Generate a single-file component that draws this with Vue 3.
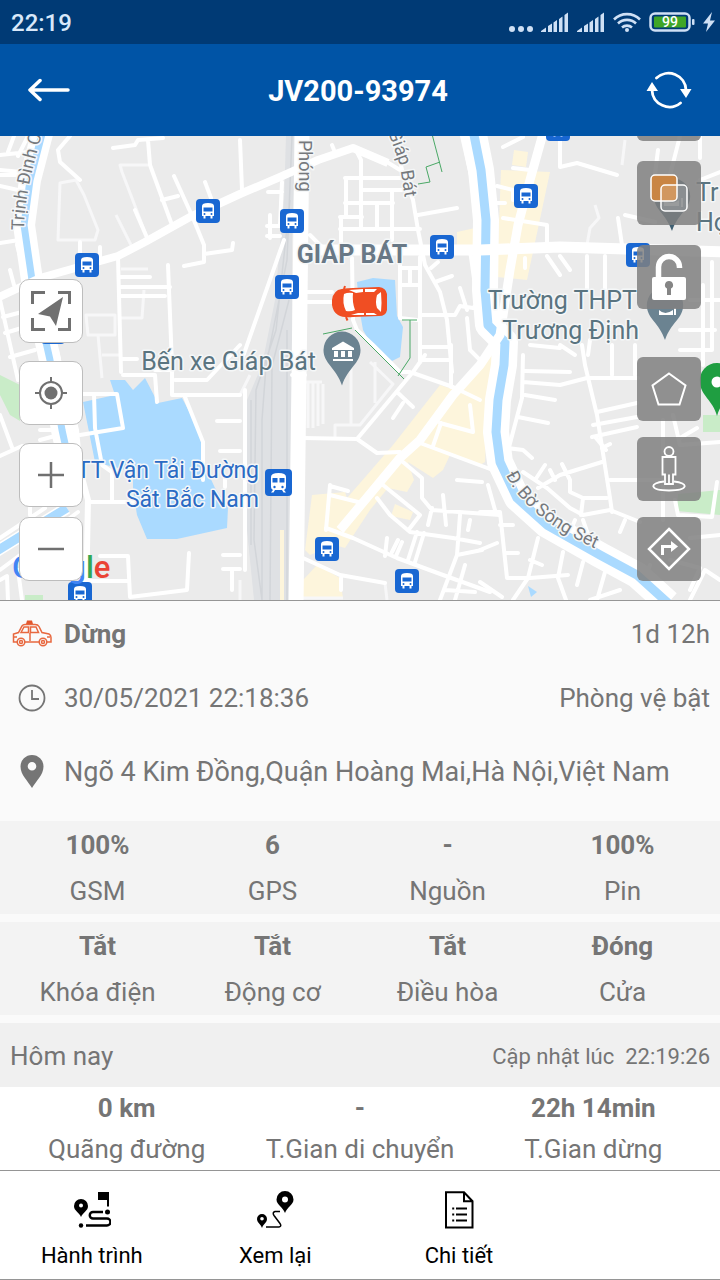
<template>
  <div class="page">
    <!-- Thanh trạng thái -->
    <div class="status-bar">
      <span class="clock">22:19</span>
      <div class="status-icons">
        <svg class="dots" viewBox="0 0 24 20">
          <circle v-for="x in [3, 12, 21]" :key="x" :cx="x" cy="17" r="3" />
        </svg>
        <svg v-for="n in 2" :key="n" class="signal" viewBox="0 0 28 20">
          <path d="M0 20v-1l5-3.500v4.500zM7 20v-6l4-2.500v8.500zM12.500 20v-9.500l3.500-2.500v12zM18 20v-13l3.500-2.500v15.500zM23.500 20v-17l3.500-2.500v19.500z" />
        </svg>
        <svg class="wifi" viewBox="0 0 28 20">
          <g fill="none" stroke="#cfe0f5" stroke-width="2.600">
            <path d="M1 7.500a18.500 18.500 0 0 1 26 0" />
            <path d="M5 11.500a13 13 0 0 1 18 0" />
            <path d="M9 15.500a7.500 7.500 0 0 1 10 0" />
          </g>
          <circle cx="14" cy="18" r="2" />
        </svg>
        <svg class="battery" viewBox="0 0 46 20">
          <rect x="1.500" y="1.500" width="39" height="17" rx="4.500" fill="none" stroke="#cfe0f5" stroke-width="2.500" />
          <rect x="5" y="4.500" width="32" height="11" rx="1" fill="#3fa527" />
          <rect x="43" y="7" width="2.500" height="6" rx="1" />
          <text x="21" y="15" text-anchor="middle">99</text>
        </svg>
        <svg class="bolt" viewBox="0 0 12 20">
          <path d="M9 0L0 11.500h5L3 20l9-11.500H7z" />
        </svg>
      </div>
    </div>

    <header class="app-header">
      <button class="header-btn" aria-label="Quay lại">
        <svg width="42" height="24" viewBox="0 0 42 24">
          <path d="M2 12h38M12 2.500L2 12l10 9.500" fill="none" stroke="#fff" stroke-width="3.500" stroke-linecap="round" stroke-linejoin="round" />
        </svg>
      </button>
      <h1>JV200-93974</h1>
      <button class="header-btn" aria-label="Làm mới">
        <svg width="46" height="40" viewBox="0 0 46 40">
          <path d="M10.500 8A17.500 17.500 0 0 1 40 20M34.500 33A17.500 17.500 0 0 1 6 20" fill="none" stroke="#fff" stroke-width="2.800" stroke-linecap="round" />
          <path d="M34 19h11.500L40 28zM0.500 21h11.500L6 12z" fill="#fff" />
        </svg>
      </button>
    </header>

    <main class="map">
      <svg class="map-canvas" viewBox="0 136 720 464" preserveAspectRatio="xMidYMid slice">
        <defs>
          <symbol id="bus" viewBox="0 0 24 24">
            <rect width="24" height="24" rx="4" fill="#1967d2" />
            <path d="M6 7q0-3 6-3t6 3v10h-1.500v2.500h-2V17h-5v2.500h-2V17H6z" fill="#fff" />
            <path d="M7.500 8.500h9v4h-9z" fill="#1967d2" />
            <circle cx="8.500" cy="15" r="1" fill="#1967d2" />
            <circle cx="15.500" cy="15" r="1" fill="#1967d2" />
          </symbol>
          <symbol id="pin" viewBox="0 0 38 54">
            <path d="M19 0a18.500 18.500 0 0 1 18.500 18.500C37.500 32 25 36 19 54 13 36 .5 32 .5 18.500A18.500 18.500 0 0 1 19 0z" />
          </symbol>
        </defs>

        <rect x="0" y="136" width="720" height="464" fill="#ebebeb" />

        <!-- Đường sắt -->
        <path d="M286 136H296L292 240V600H254L247 530V400L262 365L275 300L284 200Z" fill="#dfe1e4" />
        <path class="rail" d="M292 136L287 260 266 366 262 420V600M290 200L276 330 256 390 254 540 262 600M289 300L272 366 270 600M287 330V600M251 400V545" />

        <path v-for="d in parks" :key="d" :d="d" fill="#c9ecc8" />
        <path v-for="d in blocks" :key="d" :d="d" fill="#fdf5dc" />
        <path v-for="d in lakes" :key="d" :d="d" fill="#aadaff" />

        <path v-for="d in lanes" :key="d" :d="d" class="lane" />
        <path v-for="d in roads" :key="d" :d="d" class="road" />
        <path v-for="r in rivers" :key="r.d" :d="r.d" class="bank" :stroke-width="r.bank" />
        <path v-for="r in rivers" :key="r.d" :d="r.d" class="river" :stroke-width="r.w" />
        <path v-for="r in avenues" :key="r.d" :d="r.d" class="avenue" :stroke-width="r.w" />
        <path v-for="d in greenLines" :key="d" :d="d" class="green-line" />

        <use v-for="b in busStops" :key="b.x + '-' + b.y" href="#bus" :x="b.x - 12" :y="b.y - 12" width="24" height="24" />

        <!-- Ga tàu -->
        <g>
          <rect x="265" y="469" width="27" height="27" rx="4" fill="#1967d2" />
          <path d="M271 477q0-4 7.500-4t7.500 4v10q0 2-2 3l2 2.500h-2.500l-1.500-2.500h-7l-1.500 2.500H271l2-2.500q-2-1-2-3z" fill="#fff" />
          <path d="M272.500 478h5v4.500h-5zM279.500 478h5v4.500h-5z" fill="#1967d2" />
          <circle cx="274.500" cy="487" r="1.200" fill="#1967d2" />
          <circle cx="282.500" cy="487" r="1.200" fill="#1967d2" />
        </g>

        <g fill="#6b8391">
          <use href="#pin" x="323" y="331" width="38" height="55" />
          <use href="#pin" x="646" y="287" width="38" height="53" />
          <use href="#pin" x="653" y="178" width="38" height="53" fill="#3f5f72" />
        </g>
        <path d="M332 348l11-6.500 11 6.500v2h-22zM334 351h4v6h-4zM341 351h4v6h-4zM348 351h4v6h-4zM333 359h20v2h-20z" fill="#fff" />
        <path d="M659 310q6 6 14 0v5h-14zM674 308h2v7h-2z" fill="#fff" />
        <path d="M664 200q8 6 15 0v6h-15zM681 198h2v9h-2z" fill="#b9c6ce" />

        <!-- Nhãn địa điểm -->
        <text class="label area" x="352" y="263" text-anchor="middle">GIÁP BÁT</text>
        <text class="label place" x="316" y="370" text-anchor="end">Bến xe Giáp Bát</text>
        <text class="label place" x="637" y="309" text-anchor="end">Trường THPT</text>
        <text class="label place" x="639" y="339" text-anchor="end">Trương Định</text>
        <text class="label place" x="696" y="201">Tr</text>
        <text class="label place" x="696" y="231">Họ</text>
        <text class="label transit" x="259" y="478" text-anchor="end">TT Vận Tải Đường</text>
        <text class="label transit" x="259" y="507" text-anchor="end">Sắt Bắc Nam</text>

        <path id="street-trinh" d="M24 230Q24 190 47 118" fill="none" />
        <path id="street-giap" d="M388 132L400 165 411 240" fill="none" />
        <path id="street-phong" d="M299 140V230" fill="none" />
        <path id="street-set" d="M506 475Q528 523 620 559" fill="none" />
        <text class="label street"><textPath href="#street-trinh">Trịnh Đình C</textPath></text>
        <text class="label street"><textPath href="#street-giap">Giáp Bát</textPath></text>
        <text class="label street"><textPath href="#street-phong">Phóng</textPath></text>
        <text class="label street"><textPath href="#street-set">Đ. Bờ Sông Sét</textPath></text>

        <text class="brand" x="12" y="578"><tspan fill="#4285f4">G</tspan><tspan fill="#ea4335">o</tspan><tspan fill="#fbbc05">o</tspan><tspan fill="#4285f4">g</tspan><tspan fill="#34a853">l</tspan><tspan fill="#ea4335">e</tspan></text>

        <!-- Xe -->
        <g>
          <path d="M344 289l1-3M346 317l1.500 3.500" stroke="#f04e23" stroke-width="2" />
          <path d="M338 290q5-2 15-2l26-1q7 1 8 7v16q-1 6-8 6l-26 1q-10 1-15-2-5-3-6-10-1-11 6-15z" fill="#f04e23" />
          <path d="M344 294q4-2 9-1-1 9 2 17-4 2-9 1-4-8-2-17zM377 295l4-3q1 11 0 20l-4-4q-2-6 0-13zM349 290l14-1v3l-7 1zM365 289h12l-3 3h-9zM351 315l7-2h6v2zM366 313h8l3 2h-11z" fill="#fff" />
        </g>

        <path d="M717 363a17 17 0 0 1 17 19c0 13-13 18-17 34-4-16-17-21-17-34a17 17 0 0 1 17-19z" fill="#1f9e41" />
        <circle cx="717" cy="382" r="5.500" fill="#fff" />
      </svg>

      <div class="tools tools-left">
        <button class="tool light" aria-label="Theo dõi xe">
          <svg width="40" height="40" viewBox="0 0 40 40">
            <path d="M1.500 13V1.500H14M27 1.500h11.500V13M38.500 27v11.500H27M14 38.500H1.500V27" fill="none" stroke="#707070" stroke-width="3" />
            <path d="M32 6L7 23l12 2.500L25 35z" fill="#707070" />
          </svg>
        </button>
        <button class="tool light" aria-label="Vị trí của tôi">
          <svg width="34" height="34" viewBox="0 0 34 34">
            <circle cx="17" cy="17" r="11" fill="none" stroke="#707070" stroke-width="2" />
            <circle cx="17" cy="17" r="6.500" fill="#707070" />
            <path d="M17 1v6M17 27v6M1 17h6M27 17h6" stroke="#707070" stroke-width="2" />
          </svg>
        </button>
        <div class="zoom">
          <button class="tool light" aria-label="Phóng to">
            <svg width="26" height="26" viewBox="0 0 26 26"><path d="M13 0v26M0 13h26" stroke="#707070" stroke-width="2.500" /></svg>
          </button>
          <button class="tool light" aria-label="Thu nhỏ">
            <svg width="26" height="26" viewBox="0 0 26 26"><path d="M0 13h26" stroke="#707070" stroke-width="2.500" /></svg>
          </button>
        </div>
      </div>

      <div class="tools tools-right">
        <div class="group upper">
          <button class="tool dark" aria-label="Tùy chọn bản đồ"></button>
          <button class="tool dark" aria-label="Lớp bản đồ">
            <svg width="40" height="38" viewBox="0 0 40 38">
              <rect x="2" y="1" width="26" height="26" rx="4" fill="#c98544" stroke="#fff" stroke-width="1.500" />
              <rect x="12" y="11" width="26" height="26" rx="4" fill="#fff" fill-opacity=".15" stroke="#fff" stroke-width="1.500" />
            </svg>
          </button>
          <button class="tool dark" aria-label="Mở khóa">
            <svg width="36" height="48" viewBox="0 0 36 48">
              <path d="M7.500 26V14a10.500 10.500 0 0 1 21 0v1" fill="none" stroke="#fff" stroke-width="5.500" stroke-linecap="butt" />
              <rect x="1" y="24" width="34" height="23" rx="2" fill="#fff" />
              <path d="M18 28a4 4 0 0 1 2 7.500V42h-4v-6.500a4 4 0 0 1 2-7.500z" fill="#858585" />
            </svg>
          </button>
        </div>
        <div class="group lower">
          <button class="tool dark" aria-label="Vùng">
            <svg width="36" height="34" viewBox="0 0 36 34">
              <path d="M18 1.500L34.500 13.500 28.500 32.500H7.500L1.500 13.500z" fill="none" stroke="#fff" stroke-width="2" />
            </svg>
          </button>
          <button class="tool dark" aria-label="Xem phố">
            <svg width="34" height="46" viewBox="0 0 34 46">
              <g fill="none" stroke="#fff" stroke-width="1.800">
                <circle cx="17" cy="5.500" r="4.500" />
                <path d="M10.500 11h13v17.500H21V38h-8V28.500h-2.500zM17 28.500V38" />
                <path d="M12 35.500C-3 37-3 44.500 17 44.500s20-7.500 5-9" />
              </g>
            </svg>
          </button>
          <button class="tool dark" aria-label="Chỉ đường">
            <svg width="44" height="44" viewBox="0 0 44 44">
              <path d="M22 2L42 22 22 42 2 22z" fill="none" stroke="#fff" stroke-width="2.500" />
              <path d="M15.500 28v-8.500H25" fill="none" stroke="#fff" stroke-width="3" />
              <path d="M24 14l7 5.500-7 5.500z" fill="#fff" />
            </svg>
          </button>
        </div>
      </div>
    </main>

    <section class="info">
      <div class="info-row">
        <svg class="info-icon" viewBox="0 0 40 28">
          <path d="M14 4l1-3.500h5L21 4z" fill="#e2562d" />
          <g fill="none" stroke="#e8683f" stroke-width="1.500">
            <path d="M5 22H1.500v-8l5-1.500L10 6q1-1.500 3-1.500h10q3 0 4 2l3 6 7 1.500q2 1 2 3.500v4.500h-4M13 22h14" />
            <path d="M9 12.500L12 7h4.500v5.500zM18.500 7H24l2.500 5.500h-8zM18 13v8M2 17h3M35 17h3" />
            <circle cx="9" cy="22" r="3.800" />
            <circle cx="31" cy="22" r="3.800" />
            <circle cx="9" cy="22" r="1.500" />
            <circle cx="31" cy="22" r="1.500" />
          </g>
        </svg>
        <strong>Dừng</strong>
        <span class="end">1d 12h</span>
      </div>
      <div class="info-row">
        <svg class="info-icon" viewBox="0 0 40 28">
          <circle cx="20" cy="14" r="12.500" fill="none" stroke="#757575" stroke-width="1.800" />
          <path d="M20 6v9h7" fill="none" stroke="#757575" stroke-width="1.800" />
        </svg>
        <time>30/05/2021 22:18:36</time>
        <span class="end">Phòng vệ bật</span>
      </div>
      <div class="info-row address">
        <svg class="info-icon tall" viewBox="0 0 40 34">
          <path fill-rule="evenodd" d="M20 0a11.500 11.500 0 0 1 11.500 11.500C31.500 20 24 26 20 33 16 26 8.500 20 8.500 11.500A11.500 11.500 0 0 1 20 0zm0 7a4.300 4.300 0 1 0 0 8.600 4.300 4.300 0 0 0 0-8.600z" fill="#757575" />
        </svg>
        <span>Ngõ 4 Kim Đồng,Quận Hoàng Mai,Hà Nội,Việt Nam</span>
      </div>
    </section>

    <dl v-for="(group, i) in sensors" :key="i" class="stats">
      <div v-for="item in group" :key="item.label">
        <dd>{{ item.value }}</dd>
        <dt>{{ item.label }}</dt>
      </div>
    </dl>

    <div class="today-head">
      <span>Hôm nay</span>
      <span class="updated">Cập nhật lúc&nbsp; 22:19:26</span>
    </div>
    <dl class="stats today">
      <div v-for="item in today" :key="item.label">
        <dd>{{ item.value }}</dd>
        <dt>{{ item.label }}</dt>
      </div>
    </dl>

    <nav class="tabs">
      <button>
        <svg width="38" height="38" viewBox="0 0 38 38">
          <path fill-rule="evenodd" d="M8 8a7 7 0 0 1 7 7c0 5-5 6-7 11-2-5-7-6-7-11a7 7 0 0 1 7-7zm0 4.500a2 2 0 1 0 0 4 2 2 0 0 0 0-4z" />
          <path d="M25 1h11v14.500h-2V9h-9z" />
          <circle cx="34.500" cy="21" r="2.500" />
          <circle cx="8" cy="34.500" r="2.200" />
          <path d="M30 21H20a3 3 0 0 0 0 6.500h14a3 3 0 0 1 0 7H13" fill="none" stroke="#000" stroke-width="2.400" />
        </svg>
        <span>Hành trình</span>
      </button>
      <button>
        <svg width="38" height="38" viewBox="0 0 38 38">
          <path fill-rule="evenodd" d="M29 0a8.500 8.500 0 0 1 8.500 8.500C37.500 14 31 16 29 22c-2-6-8.500-8-8.500-13.500A8.500 8.500 0 0 1 29 0zm0 5.500a3 3 0 1 0 0 6 3 3 0 0 0 0-6z" />
          <path fill-rule="evenodd" d="M6 23a5 5 0 0 1 5 5c0 4-4 5-5 9-1-4-5-5-5-9a5 5 0 0 1 5-5zm0 3a1.800 1.800 0 1 0 0 3.600 1.800 1.800 0 0 0 0-3.600z" />
          <path d="M24 20.500h-5q-3 1-1 4l6 8q2 3-1 3.500H10" fill="none" stroke="#000" stroke-width="1.500" />
        </svg>
        <span>Xem lại</span>
      </button>
      <button>
        <svg width="38" height="38" viewBox="0 0 38 38">
          <path d="M6 1.200h18l8.500 9V36.500H6zM24 1.200v9h8.500" fill="none" stroke="#000" stroke-width="2" />
          <path d="M16 17.500h11M16 23.500h11M16 29.500h11M12.200 17.500h2M12.200 23.500h2M12.200 29.500h2" stroke="#000" stroke-width="2" />
        </svg>
        <span>Chi tiết</span>
      </button>
    </nav>
  </div>
</template>

<script setup>
// Dữ liệu cảm biến của xe
const sensors = [
  [
    { value: '100%', label: 'GSM' },
    { value: '6', label: 'GPS' },
    { value: '-', label: 'Nguồn' },
    { value: '100%', label: 'Pin' }
  ],
  [
    { value: 'Tắt', label: 'Khóa điện' },
    { value: 'Tắt', label: 'Động cơ' },
    { value: 'Tắt', label: 'Điều hòa' },
    { value: 'Đóng', label: 'Cửa' }
  ]
]

const today = [
  { value: '0 km', label: 'Quãng đường' },
  { value: '-', label: 'T.Gian di chuyển' },
  { value: '22h 14min', label: 'T.Gian dừng' }
]

const busStops = [
  { x: 208, y: 211 }, { x: 87, y: 265 }, { x: 292, y: 221 }, { x: 287, y: 287 },
  { x: 442, y: 247 }, { x: 526, y: 196 }, { x: 638, y: 255 }, { x: 327, y: 549 },
  { x: 407, y: 581 }, { x: 80, y: 594 }, { x: 558, y: 129 }, { x: 53, y: 332 }
]

const parks = [
  'M0 375L20 385V421L10 415 0 395Z',
  'M25 595H43V600H25Z',
  'M703 415H720V432H703Z',
  'M678 494L720 490V515L677 511Z'
]

const blocks = [
  'M514 150L528 152 526 167 512 165Z',
  'M501 170L550 172 527 280 497 277Z',
  'M457 232L475 228V245H457Z',
  'M347 498L393 445 440 385 455 390 480 360 505 335 508 345 490 372 485 462 480 465 450 455 443 470 433 478 408 462 414 480 407 492 388 488 370 510 345 548 335 545 310 555 305 550 312 495 345 492Z',
  'M303 580L317 565 340 578 343 598H300Z',
  'M395 504L413 512 410 520 391 516Z',
  'M280 530H284V600H280Z'
]

const lakes = [
  'M357 282L373 278 395 280 397 316 403 327 400 357 392 361 373 347 363 330 360 313Z',
  'M110 380H125L133 390 145 378 158 403 182 398 200 432 203 462 215 488 228 508 227 528 177 539H147L137 515 133 490 133 472 95 462 83 402 115 395Z',
  'M528 586L537 592 531 597Z'
]

// Ngõ nhỏ, màu nhạt
const lanes = [
  'M60 183L76 180 84 195 98 230 95 240H58Z',
  'M148 165H120L122 172 148 240', 'M116 215L131 245',
  'M86 315H115V335H88Z', 'M98 335L102 378', 'M121 318H142L144 290',
  'M121 269H148M102 355H120', 'M595 205L599 218 590 228 587 245',
  'M308 382V428M313 382V428M318 382V426M323 384V424M303 382H322',
  'M335 438V425H360L393 384 370 362M351 365V425M375 362V403',
  'M303 598H343M387 600L385 583', 'M625 140L622 165', 'M240 395L250 375M240 580V600'
]

const roads = [
  'M0 155L28 152M0 175H20M0 186L18 190M14 136L8 152M28 136L18 156M0 170L22 172',
  'M20 225L17 245 25 275 48 365M0 243L32 238M0 300L18 380M3 317L22 312M5 333L25 327M10 357L35 350M10 270L14 285',
  'M70 136L58 150 60 162 80 180', 'M113 148L135 145 138 140 163 138M148 140L150 165 172 225M135 210L148 240',
  'M174 176L193 218M162 200L178 196M205 182L211 198M193 218L204 245V262L184 266M204 254L232 250 233 243',
  'M118 257L121 372M121 277H150M121 287H170M121 296H165M168 265L172 365M80 242V256M100 247V258M121 359H137',
  'M240 140L242 190M282 182L280 225M240 365L284 240M268 192H282M267 226H280M267 236H280M270 238V215M0 415L13 450M0 456L22 446',
  'M305 375H292M387 162L400 170M332 145L336 155M345 178H400M363 190H408M345 203H393M340 217H362M340 229H420M355 148L361 160V228M346 178V216M341 217V245M377 205V228M392 190V240M310 235L325 250',
  'M395 136L402 170 413 200 418 230 425 265 440 292 447 320 452 372M418 215L457 208M420 257V362M352 258L353 320 357 330 373 345 400 372 410 372',
  'M307 292H332M307 302H332M400 262V318L417 320M400 268H420M410 268V285M400 285H420M422 315H455L460 306 473 308 482 300M422 347H450M422 360H450M460 288L467 310M435 282L452 276M431 268L438 262M467 318L470 350 480 360',
  'M470 250L477 300M462 136L472 180 478 245',
  'M503 147L523 137M560 136V167L577 163 617 175M513 168L530 170M497 186L513 190V200M497 203H505M503 218L547 225V243M618 218L622 245M587 256V290M605 256V290M547 256L560 275M560 256L570 270M525 258V268',
  'M658 150L653 190M680 136L670 175M700 136V158M625 215L655 222M700 180L720 172M712 262V350M690 300H720M703 285V365M680 330H715M680 350H712',
  'M582 345L585 365 597 415 610 498 612 512M523 382L560 385 587 378H638M525 371L570 372M525 395L555 400M518 417L548 423M523 355L522 398 513 432 507 455',
  'M597 412L637 403M593 425L637 417M592 437L637 427M588 355L590 340M612 345V375M635 345V375M560 345L575 355M530 345L560 348',
  'M523 472L547 488 570 508 583 515 610 510 640 522M538 488L560 475 602 462M562 464L570 480V492L583 498H607M583 498L581 515M610 480H660M507 448L523 450 532 458M550 470L555 480M535 480L545 465M602 448L610 444M596 438L606 450',
  'M673 415L680 445 720 442M680 438L697 428M663 420V520M675 500L678 515 712 517 717 482M690 538L720 535M700 500',
  'M480 512H500L507 578H530L568 575M500 525H513M538 538L528 578 513 600M563 552L558 578 566 600M583 562L577 585M605 572L597 600M488 485L495 510M480 550L497 543M480 582L502 597M505 553H518M590 600L620 590M530 560L542 565M640 590L650 565M690 600L705 570 720 580M670 560L700 568 690 590M625 520L620 532M570 532L575 520M590 540L583 520',
  'M83 394H117L123 428 80 435M94 394L95 428 102 465 112 472V502M89 502H133M123 375H155L157 402M172 365V395H240M185 397L203 442V480M155 370H172M175 380H207L240 345M217 421H240M220 451H240M225 478V487M245 390V570M40 430H60M40 440L55 436',
  'M0 538L45 508M0 570L78 512M30 500V515M100 556H128L130 597 187 590 189 553M84 581H127M0 580L7 576 8 600M18 570L22 600M223 555H240M223 569H240M232 570V590',
  'M303 438L357 439 377 453 400 452M357 439L413 372 425 355M397 392L413 407M403 403L393 418M413 373L453 387 480 400M451 345V387M440 423L473 432 470 405M441 423L433 446M420 443L490 469',
  'M330 485L326 530M330 486L348 491M330 495L358 502M326 528L353 538 397 558 443 575 490 592M303 558L340 575 385 583M341 578V590',
  'M377 498L390 515 410 532 453 538 480 543M383 485L420 515 410 528M403 462L422 478V498L432 510 500 515M432 508L428 525M443 495L446 525M460 515L457 555 440 600M424 533L415 562M417 532L408 560M457 555L482 550M387 538L385 556M402 542L396 556M398 540L392 552M457 480L482 482M445 590L475 592M465 565L455 600M470 520L468 530'
]

const rivers = [
  { d: 'M43 130L30 180 24 225 32 280 50 360 62 430 66 448', w: 7, bank: 22 },
  { d: 'M-5 552L34 528 67 508', w: 9, bank: 12 },
  { d: 'M473 130L481 170 486 220 485 290 488 325 505 342 504 365 498 400 496 432 500 462 517 498 547 525 600 555 637 575 668 603', w: 9, bank: 26 }
]

const avenues = [
  { d: 'M-5 299L40 278 118 256 145 242 190 217 240 194 280 177 318 160 353 148 388 163', w: 8 },
  { d: 'M302 130L300 300 296 605', w: 15 },
  { d: 'M305 250H480L560 247 725 252', w: 11 },
  { d: 'M544 130L530 180 518 225 510 270 500 335 480 365 453 395 420 440 400 458 340 530', w: 9 },
  { d: 'M56 350L60 370 76 430 80 470 88 500 86 600', w: 6 }
]

const greenLines = [
  'M432 134L442 172M440 162L426 167 430 182 418 184',
  'M323 334L352 328M355 330L404 379M402 320H417M410 320V358L398 376'
]
</script>

<style>
body {
  margin: 0;
  background: #fff;
}
</style>

<style scoped>
.page {
  display: flex;
  flex-direction: column;
  min-height: 100vh;
  background: #fafafa;
  color: #757575;
  font-family: Roboto, "Noto Sans", sans-serif;
  font-size: 26px;
}

button {
  padding: 0;
  border: 0;
  background: none;
  font: inherit;
  color: inherit;
  cursor: pointer;
}

svg {
  display: block;
}

.status-bar {
  display: flex;
  align-items: center;
  justify-content: space-between;
  height: 44px;
  padding: 0 5px 0 11px;
  background: #003a75;
}

.clock {
  padding-top: 2px;
  color: #d9e8fa;
  font-size: 24px;
  font-weight: 500;
}

.status-icons {
  display: flex;
  align-items: center;
  gap: 8px;
}

.status-icons svg {
  height: 20px;
  fill: #cfe0f5;
}

.status-icons text {
  fill: #fff;
  font-size: 14px;
  font-weight: 500;
}

.dots {
  width: 24px;
}

.signal {
  width: 28px;
}

.wifi {
  width: 28px;
}

.battery {
  width: 46px;
}

.bolt {
  width: 12px;
}

.app-header {
  display: flex;
  align-items: center;
  justify-content: space-between;
  height: 92px;
  padding: 0 28px;
  background: #0054a6;
}

.app-header h1 {
  flex: 1;
  margin: 0;
  padding-top: 2px;
  color: #fff;
  font-size: 29px;
  font-weight: 700;
  text-align: center;
}

.header-btn {
  display: flex;
}

.map {
  position: relative;
  flex: 1 0 420px;
  overflow: hidden;
  border-bottom: 1px solid #959595;
}

.map-canvas {
  position: absolute;
  width: 100%;
  height: 100%;
}

.rail {
  fill: none;
  stroke: #d2d5d9;
  stroke-width: 1.5;
}

.lane,
.road,
.bank,
.river,
.avenue,
.green-line {
  fill: none;
  stroke-linejoin: round;
}

.lane {
  stroke: #f7f7f8;
  stroke-width: 3;
}

.road {
  stroke: #fff;
  stroke-width: 4;
  stroke-linecap: round;
}

.bank,
.avenue {
  stroke: #fff;
}

.river {
  stroke: #aadaff;
}

.green-line {
  stroke: #4aa866;
  stroke-width: 1;
}

.label {
  paint-order: stroke;
  stroke: #f5f7f8;
  stroke-width: 3;
  stroke-linejoin: round;
}

.area {
  fill: #687886;
  font-size: 25px;
  font-weight: 700;
}

.place {
  fill: #5a7480;
  font-size: 25px;
}

.transit {
  fill: #2b6bc4;
  font-size: 23px;
}

.street {
  fill: #75797d;
  font-size: 18px;
}

.brand {
  font-size: 31px;
  font-weight: 500;
}

/* Các nút nổi trên bản đồ */
.tools {
  position: absolute;
  bottom: 19px;
  display: flex;
  flex-direction: column;
}

.tools-left {
  left: 19px;
  gap: 18px;
}

.tools-right {
  right: 19px;
  gap: 48px;
}

.zoom,
.group {
  display: flex;
  flex-direction: column;
}

.zoom {
  gap: 10px;
}

.upper {
  gap: 20px;
}

.lower {
  gap: 16px;
}

.tool {
  display: flex;
  align-items: center;
  justify-content: center;
  box-sizing: border-box;
  width: 64px;
  height: 64px;
}

.light {
  border: 1px solid #bdbdbd;
  border-radius: 10px;
  background: #fff;
}

.dark {
  border-radius: 6px;
  background: rgba(128, 128, 128, 0.85);
}

.info {
  padding: 1px 0 7px;
}

.info-row {
  display: flex;
  align-items: center;
  height: 64px;
  padding: 0 10px 0 12px;
}

.info-icon {
  flex: none;
  width: 40px;
  height: 28px;
  margin-right: 12px;
}

.info-icon.tall {
  height: 34px;
}

.address {
  height: 84px;
  font-size: 27px;
}

.end {
  margin-left: auto;
}

.stats {
  display: grid;
  grid-template-columns: repeat(4, 1fr);
  margin: 0 0 8px;
  padding: 1px 10px 0;
  background: #f3f3f3;
  line-height: 46px;
  text-align: center;
}

.stats dd {
  margin: 0;
  font-weight: 700;
}

.today-head {
  display: flex;
  align-items: center;
  justify-content: space-between;
  box-sizing: border-box;
  height: 64px;
  padding: 2px 10px 0;
  background: #f0f0f0;
}

.updated {
  font-size: 22px;
}

.today {
  grid-template-columns: repeat(3, 1fr);
  margin: 0;
  background: #fff;
  line-height: 41px;
}

.tabs {
  display: grid;
  grid-template-columns: repeat(3, 25.5%);
  height: 108px;
  border-top: 1px solid #959595;
  border-bottom: 1px solid #959595;
  background: #fff;
  color: #000;
}

.tabs button {
  display: flex;
  flex-direction: column;
  align-items: center;
  justify-content: center;
  gap: 14px;
  padding-top: 8px;
  font-size: 22px;
}
</style>
